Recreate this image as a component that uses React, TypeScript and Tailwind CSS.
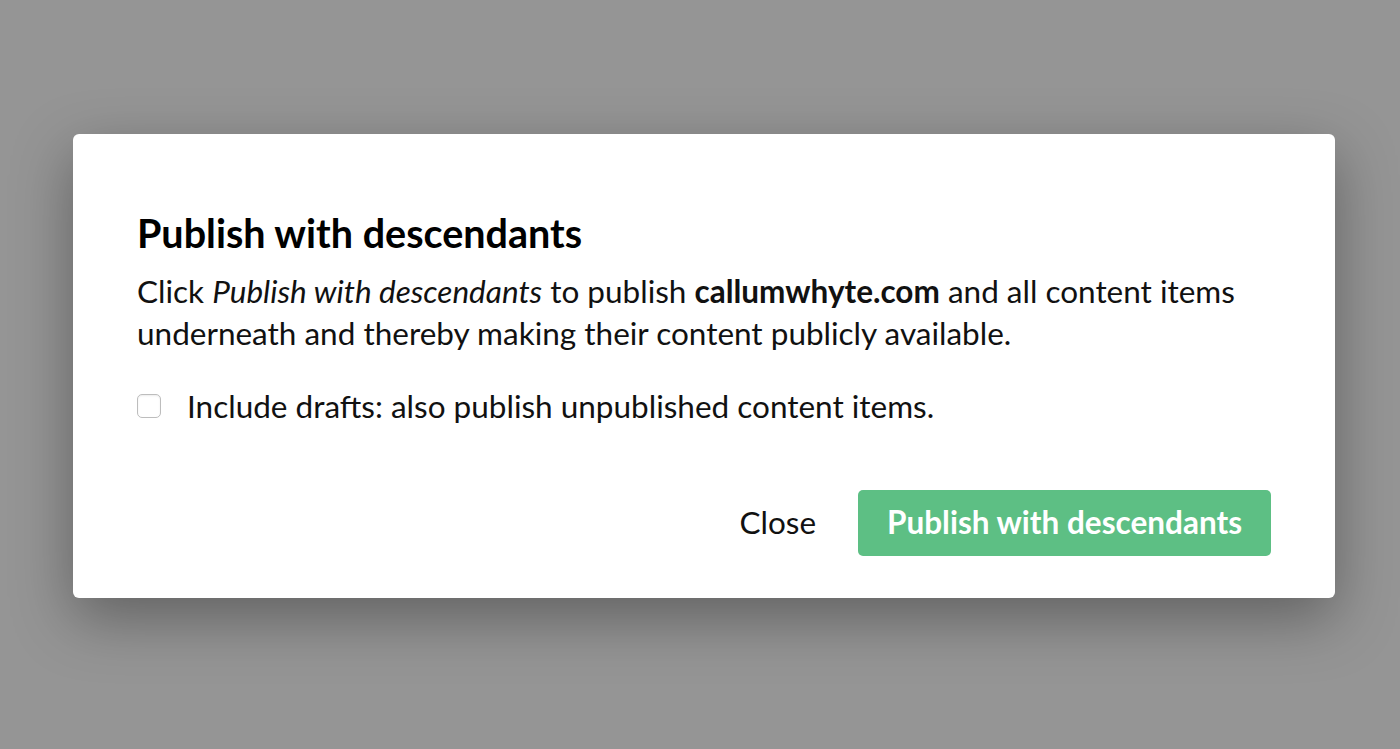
export default function App() {
  return (
    <div
      className="h-[749px] w-[1400px] bg-[#959595] pl-[73px] pt-[134px]"
      style={{ fontFamily: "Lato, 'Noto Sans', sans-serif" }}
    >
      <div className="flex h-[464px] w-[1262px] flex-col rounded-md bg-white px-[64px] pt-[77px] shadow-[0_20px_60px_rgba(0,0,0,0.35)]">
        <h2 className="text-[39.5px] font-bold leading-[44px] text-[#000]">Publish with descendants</h2>
        <p className="mt-[15px] text-[31.5px] leading-[42px] text-[#111]">
          Click <em>Publish with descendants</em> to publish <strong>callumwhyte.com</strong> and all content items
          underneath and thereby making their content publicly available.
        </p>
        <label className="mt-[31px] flex items-center gap-[26px] text-[31.5px] leading-[42px] text-[#111]">
          <span className="h-[24px] w-[24px] shrink-0 rounded-[5px] border border-[#bdbdbd] bg-white shadow-[inset_0_1px_2px_rgba(0,0,0,0.08)]" />
          Include drafts: also publish unpublished content items.
        </label>
        <div className="mt-[63px] flex items-center justify-end gap-[42px]">
          <button className="text-[31.5px] text-[#111]">Close</button>
          <button className="h-[66px] rounded-[5px] bg-[#5dbf84] px-[29px] text-[31.5px] font-bold text-white">
            Publish with descendants
          </button>
        </div>
      </div>
    </div>
  );
}
